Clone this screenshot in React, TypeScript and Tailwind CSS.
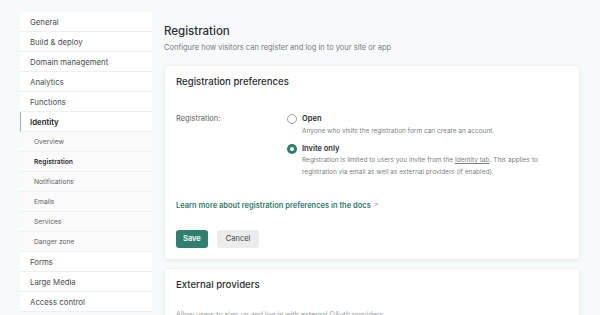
import React from "react";

const mainItems1 = ["General", "Build & deploy", "Domain management", "Analytics", "Functions"];
const subItems = ["Overview", "Registration", "Notifications", "Emails", "Services", "Danger zone"];
const mainItems2 = ["Forms", "Large Media", "Access control"];

export default function App() {
  return (
    <div
      className="h-[315px] w-[600px] overflow-hidden bg-[#f6fafb] flex pl-[20px] pt-[12px] gap-[12px]"
      style={{ fontFamily: "Inter, 'Noto Sans', sans-serif" }}
    >
      <aside className="w-[132px] shrink-0 bg-white rounded-t-[3px] self-start">
        {mainItems1.map((t) => (
          <div key={t} className="h-[20px] pt-[2px] flex items-center pl-[10px] border-b border-[#eef1f1] text-[7.8px] text-[#4a4d4f]">
            {t}
          </div>
        ))}
        <div className="h-[20px] pt-[2px] flex items-center pl-[9px] border-l-[1.5px] border-l-[#8fbcb1] border-b border-b-[#eef1f1] text-[7.8px] font-semibold text-[#222526]">
          Identity
        </div>
        {subItems.map((t) => (
          <div
            key={t}
            className={`h-[20px] pt-[2px] flex items-center pl-[14px] border-b border-[#eef1f1] bg-[#fafafa] text-[6.7px] ${t === "Registration" ? "font-semibold text-[#2a2d2e]" : "text-[#5f6366]"}`}
          >
            {t}
          </div>
        ))}
        {mainItems2.map((t) => (
          <div key={t} className="h-[20px] pt-[2px] flex items-center pl-[10px] border-b border-[#eef1f1] text-[7.8px] text-[#4a4d4f]">
            {t}
          </div>
        ))}
      </aside>

      <main className="w-[416px] shrink-0 pt-[11px]">
        <h1 className="text-[11.5px] leading-[16px] font-medium text-[#2b2e30]">Registration</h1>
        <p className="mt-[3px] text-[7.5px] leading-[12px] text-[#777b7e]">
          Configure how visitors can register and log in to your site or app
        </p>

        <section className="mt-[11px] bg-white rounded-[4px] shadow-[0_1px_3px_rgba(0,0,0,0.06)] border border-[#f0f2f2] px-[11px] pt-[9px] pb-[11px]">
          <h2 className="text-[9.6px] leading-[14px] font-medium text-[#2b2e30]">Registration preferences</h2>

          <div className="mt-[25px] flex">
            <div className="w-[111px] shrink-0 text-[7.5px] leading-[10px] text-[#5f6366]">Registration:</div>
            <div className="flex flex-col">
              <div className="flex">
                <span className="w-[10px] h-[10px] rounded-full border border-[#9ea3a6] bg-white shrink-0" />
                <div className="ml-[5px]">
                  <div className="text-[7.5px] leading-[10px] font-semibold text-[#2b2e30]">Open</div>
                  <div className="mt-[2px] text-[6.5px] leading-[10px] text-[#7b7f82]">
                    Anyone who visits the registration form can create an account.
                  </div>
                </div>
              </div>
              <div className="flex mt-[8px]">
                <span className="w-[10px] h-[10px] rounded-full bg-[#2f7f6f] shrink-0 flex items-center justify-center">
                  <span className="w-[4px] h-[4px] rounded-full bg-white" />
                </span>
                <div className="ml-[5px]">
                  <div className="text-[7.5px] leading-[10px] font-semibold text-[#2b2e30]">Invite only</div>
                  <div className="mt-[1px] w-[250px] text-[6.5px] leading-[11.5px] text-[#7b7f82]">
                    Registration is limited to users you invite from the <u>Identity tab</u>. This applies to registration via email as well as external providers (if enabled).
                  </div>
                </div>
              </div>
            </div>
          </div>

          <a className="mt-[23px] block text-[7.5px] leading-[10px] font-semibold text-[#2f7a6a]">
            Learn more about registration preferences in the docs <span className="text-[#9bb8b1] font-normal">↗</span>
          </a>

          <div className="mt-[19px] flex gap-[9px]">
            <button className="h-[18px] px-[7px] rounded-[3px] bg-[#2f7f6f] text-white text-[7.5px] font-semibold">Save</button>
            <button className="h-[18px] px-[9px] rounded-[3px] bg-[#ececec] text-[#3a3d3f] text-[7.5px]">Cancel</button>
          </div>
        </section>

        <section className="mt-[8px] bg-white rounded-[4px] shadow-[0_1px_3px_rgba(0,0,0,0.06)] border border-[#f0f2f2] px-[11px] pt-[9px] pb-[20px]">
          <h2 className="text-[9.6px] leading-[14px] font-medium text-[#2b2e30]">External providers</h2>
          <p className="mt-[18px] text-[7px] text-[#9a9ea1]">
            Allow users to sign up and log in with external OAuth providers.
          </p>
        </section>
      </main>
    </div>
  );
}
